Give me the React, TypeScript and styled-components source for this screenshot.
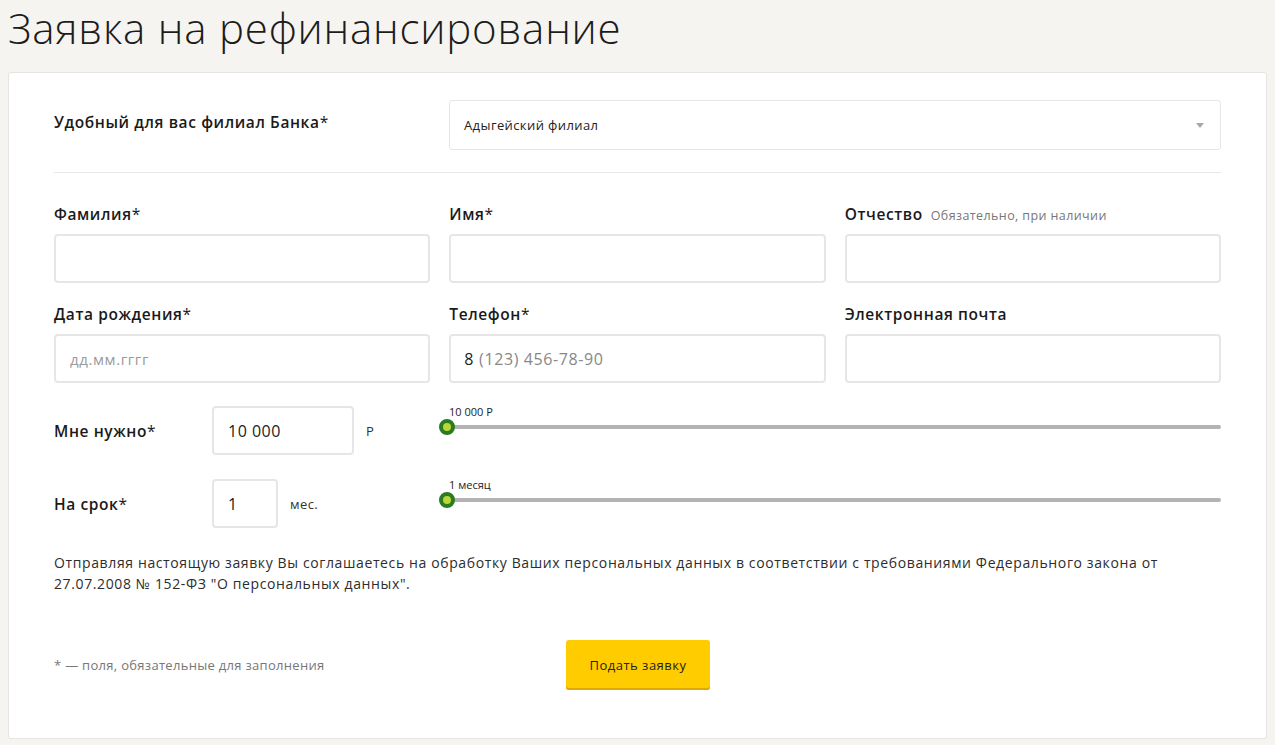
import React, { useState } from 'react'
import styled, { createGlobalStyle } from 'styled-components'

const GlobalStyle = createGlobalStyle`
  html, body {
    margin: 0;
    padding: 0;
    background: #f5f4f1;
    font-family: 'Open Sans', 'Liberation Sans', sans-serif;
    color: #1a1a1a;
  }
  * { box-sizing: border-box; }
`

const Page = styled.div`
  padding: 0 8px 6px 8px;
`

const Title = styled.h1`
  margin: 0;
  padding: 0;
  height: 72px;
  font-size: 42px;
  line-height: 56px;
  font-weight: 300;
  letter-spacing: 0.8px;
  color: #1c1c1c;
`

const Card = styled.form`
  background: #fff;
  border: 1px solid #e6e4e0;
  border-radius: 3px;
  padding: 27px 45px 48px 45px;
`

const BranchRow = styled.div`
  display: grid;
  grid-template-columns: 395px 1fr;
  align-items: start;
  padding-bottom: 22px;
  border-bottom: 1px solid #e8e8e8;
`

const Label = styled.div`
  height: 20px;
  font-size: 15.5px;
  font-weight: 600;
  letter-spacing: 0.6px;
  color: #1a1a1a;
  line-height: 20px;
  display: flex;
  align-items: baseline;
  gap: 8px;
  white-space: nowrap;
`

const BranchLabel = styled(Label)`
  margin-top: 12px;
`

const Star = styled.span`
  font-weight: 400;
  margin-left: -8px;
`

const Hint = styled.span`
  font-size: 12.5px;
  font-weight: 400;
  letter-spacing: 0.4px;
  color: #777;
`

const Select = styled.div`
  height: 50px;
  border: 1px solid #e6e6e6;
  border-radius: 3px;
  display: flex;
  align-items: center;
  justify-content: space-between;
  padding: 0 16px 0 14px;
  font-size: 13px;
  letter-spacing: 0.4px;
  color: #222;
`

const Caret = styled.span`
  width: 0;
  height: 0;
  border-left: 4px solid transparent;
  border-right: 4px solid transparent;
  border-top: 5px solid #a8a8a8;
`

const Grid = styled.div`
  display: grid;
  grid-template-columns: repeat(3, 1fr);
  column-gap: 19px;
  row-gap: 21px;
  padding-top: 31px;
`

const Field = styled.div`
  display: flex;
  flex-direction: column;
  gap: 10px;
`

const Input = styled.input<{ $w?: number }>`
  width: ${p => (p.$w ? `${p.$w}px` : '100%')};
  height: 49px;
  border: 2px solid #e6e6e6;
  border-radius: 4px;
  padding: 0 14px;
  font-family: inherit;
  font-size: 16px;
  letter-spacing: 0.5px;
  color: #222;
  outline: none;
  &::placeholder {
    color: #9a9a9a;
    font-size: 15px;
    letter-spacing: 0.6px;
  }
`

const PhoneBox = styled.div`
  height: 49px;
  border: 2px solid #e6e6e6;
  border-radius: 4px;
  padding: 0 13px;
  display: flex;
  align-items: center;
  font-size: 16px;
  letter-spacing: 0.6px;
  color: #888;
  b {
    font-weight: 400;
    color: #222;
    margin-right: 5px;
  }
`

const RangeRow = styled.div<{ $top: number }>`
  display: grid;
  grid-template-columns: 158px 228px 1fr;
  align-items: center;
  margin-top: ${p => p.$top}px;
`

const Amount = styled.div`
  display: flex;
  align-items: center;
  gap: 12px;
  font-size: 13px;
  letter-spacing: 0.4px;
  color: #333;
`

const SliderWrap = styled.div`
  position: relative;
  height: 49px;
`

const Track = styled.div`
  position: absolute;
  left: 0;
  right: 0;
  top: 19px;
  height: 4px;
  border-radius: 2px;
  background: #b3b3b3;
`

const Handle = styled.div`
  position: absolute;
  left: -1px;
  top: 13px;
  width: 16px;
  height: 16px;
  border-radius: 50%;
  background: #b8d935;
  border: 4px solid #2c7a22;
`

const ValueTip = styled.div`
  position: absolute;
  left: 9px;
  top: -2px;
  font-size: 11px;
  color: #222;
`

const Consent = styled.p`
  margin: 24px 0 0 0;
  font-size: 14px;
  letter-spacing: 0.62px;
  line-height: 21px;
  color: #2d2d2d;
`

const Footer = styled.div`
  display: grid;
  grid-template-columns: 512px auto;
  align-items: center;
  margin-top: 46px;
`

const Note = styled.div`
  font-size: 13px;
  letter-spacing: 0.3px;
  color: #777;
`

const Submit = styled.button`
  width: 144px;
  height: 50px;
  border: 0;
  border-radius: 3px;
  background: #ffcc00;
  box-shadow: inset 0 -2px 0 #e0a800;
  font-family: inherit;
  font-size: 13px;
  letter-spacing: 0.5px;
  color: #222;
  cursor: pointer;
`

export default function App() {
  const [sum, setSum] = useState('10 000')
  const [term, setTerm] = useState('1')
  return (
    <Page>
      <GlobalStyle />
      <Title>Заявка на рефинансирование</Title>
      <Card onSubmit={e => e.preventDefault()}>
        <BranchRow>
          <BranchLabel>
            Удобный для вас филиал Банка<Star>*</Star>
          </BranchLabel>
          <Select>
            Адыгейский филиал
            <Caret />
          </Select>
        </BranchRow>
        <Grid>
          <Field>
            <Label>
              Фамилия<Star>*</Star>
            </Label>
            <Input />
          </Field>
          <Field>
            <Label>
              Имя<Star>*</Star>
            </Label>
            <Input />
          </Field>
          <Field>
            <Label>
              Отчество <Hint>Обязательно, при наличии</Hint>
            </Label>
            <Input />
          </Field>
          <Field>
            <Label>
              Дата рождения<Star>*</Star>
            </Label>
            <Input placeholder="дд.мм.гггг" />
          </Field>
          <Field>
            <Label>
              Телефон<Star>*</Star>
            </Label>
            <PhoneBox>
              <b>8</b>(123) 456-78-90
            </PhoneBox>
          </Field>
          <Field>
            <Label>Электронная почта</Label>
            <Input />
          </Field>
        </Grid>
        <RangeRow $top={23}>
          <Label>
            Мне нужно<Star>*</Star>
          </Label>
          <Amount>
            <Input $w={142} value={sum} onChange={e => setSum(e.target.value)} />
            Р
          </Amount>
          <SliderWrap>
            <ValueTip>10 000 Р</ValueTip>
            <Track />
            <Handle />
          </SliderWrap>
        </RangeRow>
        <RangeRow $top={24}>
          <Label>
            На срок<Star>*</Star>
          </Label>
          <Amount>
            <Input $w={66} value={term} onChange={e => setTerm(e.target.value)} />
            мес.
          </Amount>
          <SliderWrap>
            <ValueTip>1 месяц</ValueTip>
            <Track />
            <Handle />
          </SliderWrap>
        </RangeRow>
        <Consent>
          Отправляя настоящую заявку Вы соглашаетесь на обработку Ваших персональных данных в
          соответствии с требованиями Федерального закона от 27.07.2008 № 152-ФЗ "О персональных
          данных".
        </Consent>
        <Footer>
          <Note>* — поля, обязательные для заполнения</Note>
          <Submit type="submit">Подать заявку</Submit>
        </Footer>
      </Card>
    </Page>
  )
}
